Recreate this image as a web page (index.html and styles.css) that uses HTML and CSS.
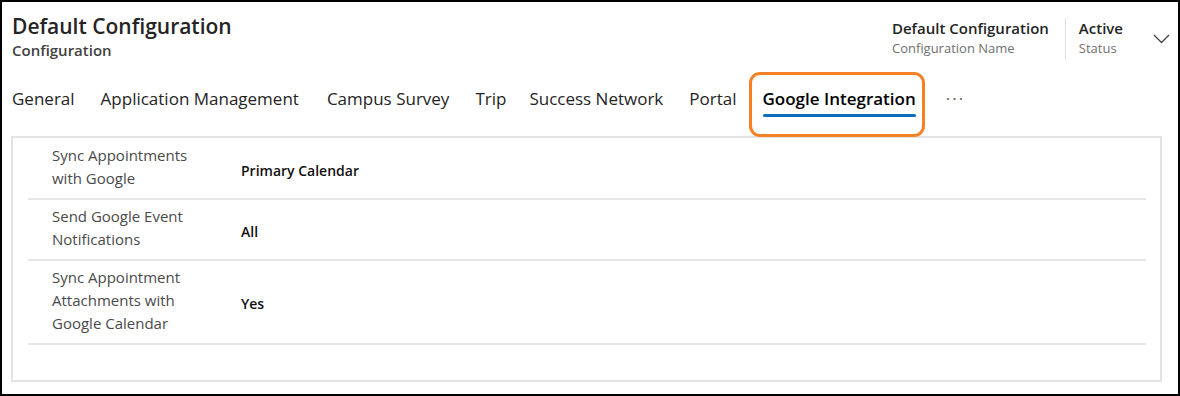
FILE: index.html
```html
<!DOCTYPE html>
<html lang="en">
<head>
  <meta charset="UTF-8">
  <meta name="viewport" content="width=device-width, initial-scale=1.0">
  <title>Default Configuration</title>
  <link rel="stylesheet" href="styles.css">
</head>
<body>
  <div class="frame">
    <div class="header">
      <div class="title-block">
        <h1 class="title">Default Configuration</h1>
        <div class="subtitle">Configuration</div>
      </div>
      <div class="header-fields">
        <div class="field">
          <div class="field-value">Default Configuration</div>
          <div class="field-label">Configuration Name</div>
        </div>
        <div class="field">
          <div class="field-value">Active</div>
          <div class="field-label">Status</div>
        </div>
        <svg class="chevron" width="17" height="10" viewBox="0 0 17 10">
          <path d="M1 1 L8.5 8.5 L16 1" fill="none" stroke="#424242" stroke-width="1.3"/>
        </svg>
      </div>
    </div>

    <div class="tabs">
      <span class="tab">General</span>
      <span class="tab wide">Application Management</span>
      <span class="tab">Campus Survey</span>
      <span class="tab short">Trip</span>
      <span class="tab">Success Network</span>
      <span class="tab">Portal</span>
      <span class="tab active">Google Integration</span>
      <span class="tab more">···</span>
    </div>

    <div class="card">
      <div class="row">
        <div class="label">Sync Appointments with Google</div>
        <div class="value">Primary Calendar</div>
      </div>
      <div class="row">
        <div class="label">Send Google Event Notifications</div>
        <div class="value">All</div>
      </div>
      <div class="row">
        <div class="label">Sync Appointment Attachments with Google Calendar</div>
        <div class="value">Yes</div>
      </div>
    </div>
  </div>
</body>
</html>
```

FILE: styles.css
```css
* {
  box-sizing: border-box;
}
body {
  margin: 0;
  font-family: "Open Sans", "Noto Sans", sans-serif;
  color: #242424;
  background: #fff;
}
.frame {
  width: 1180px;
  height: 396px;
  border: 2px solid #000;
  padding: 10px 0 0 0;
  overflow: hidden;
}
.header {
  display: flex;
  justify-content: space-between;
  padding-left: 10px;
}
.title {
  margin: 0;
  font-size: 21px;
  font-weight: 600;
  line-height: 28px;
}
.subtitle {
  font-size: 15px;
  font-weight: 600;
  line-height: 20px;
  color: #424242;
}
.header-fields {
  display: flex;
  align-items: flex-start;
  padding-top: 6px;
  padding-right: 8px;
}
.field {
  padding: 0 16px 0 0;
  height: 42px;
}
.field + .field {
  border-left: 1px solid #e0e0e0;
  padding: 0 30px 0 13px;
}
.field-value {
  font-size: 15px;
  font-weight: 600;
  line-height: 20px;
}
.field-label {
  font-size: 13px;
  line-height: 20px;
  color: #707070;
}
.chevron {
  margin-top: 16px;
}
.tabs {
  display: flex;
  padding-left: 10px;
  margin-top: 28px;
  margin-bottom: 19px;
}
.tab {
  position: relative;
  font-size: 17px;
  line-height: 22px;
  padding: 0 13px 7px;
  color: #242424;
}
.tab:first-child {
  padding-left: 0;
}
.tab.wide {
  padding-right: 15px;
}
.tab.short {
  padding-right: 10px;
}
.tab.active {
  font-weight: 600;
  color: #000;
}
.tab.active::before {
  content: "";
  position: absolute;
  left: 13px;
  right: 13px;
  bottom: 0;
  height: 3px;
  border-radius: 2px;
  background: #0f6cbd;
}
.tab.active::after {
  content: "";
  position: absolute;
  left: -1px;
  right: 4px;
  top: -16px;
  bottom: -20px;
  border: 3px solid #f58025;
  border-radius: 11px;
}
.tab.more {
  padding-left: 17px;
  color: #616161;
  letter-spacing: 2px;
}
.card {
  margin: 0 16px 0 9px;
  border: 2px solid #e3e3e3;
  padding: 1px 14px 35px 15px;
}
.row {
  display: grid;
  grid-template-columns: 213px 1fr;
  align-items: center;
  padding: 5px 0 8px;
  border-bottom: 2px solid #e6e6e6;
}
.label {
  padding-left: 24px;
  font-size: 15px;
  line-height: 23px;
  color: #4a4a4a;
  max-width: 180px;
}
.value {
  padding-top: 6px;
  font-size: 14px;
  font-weight: 600;
  color: #111;
}
```
